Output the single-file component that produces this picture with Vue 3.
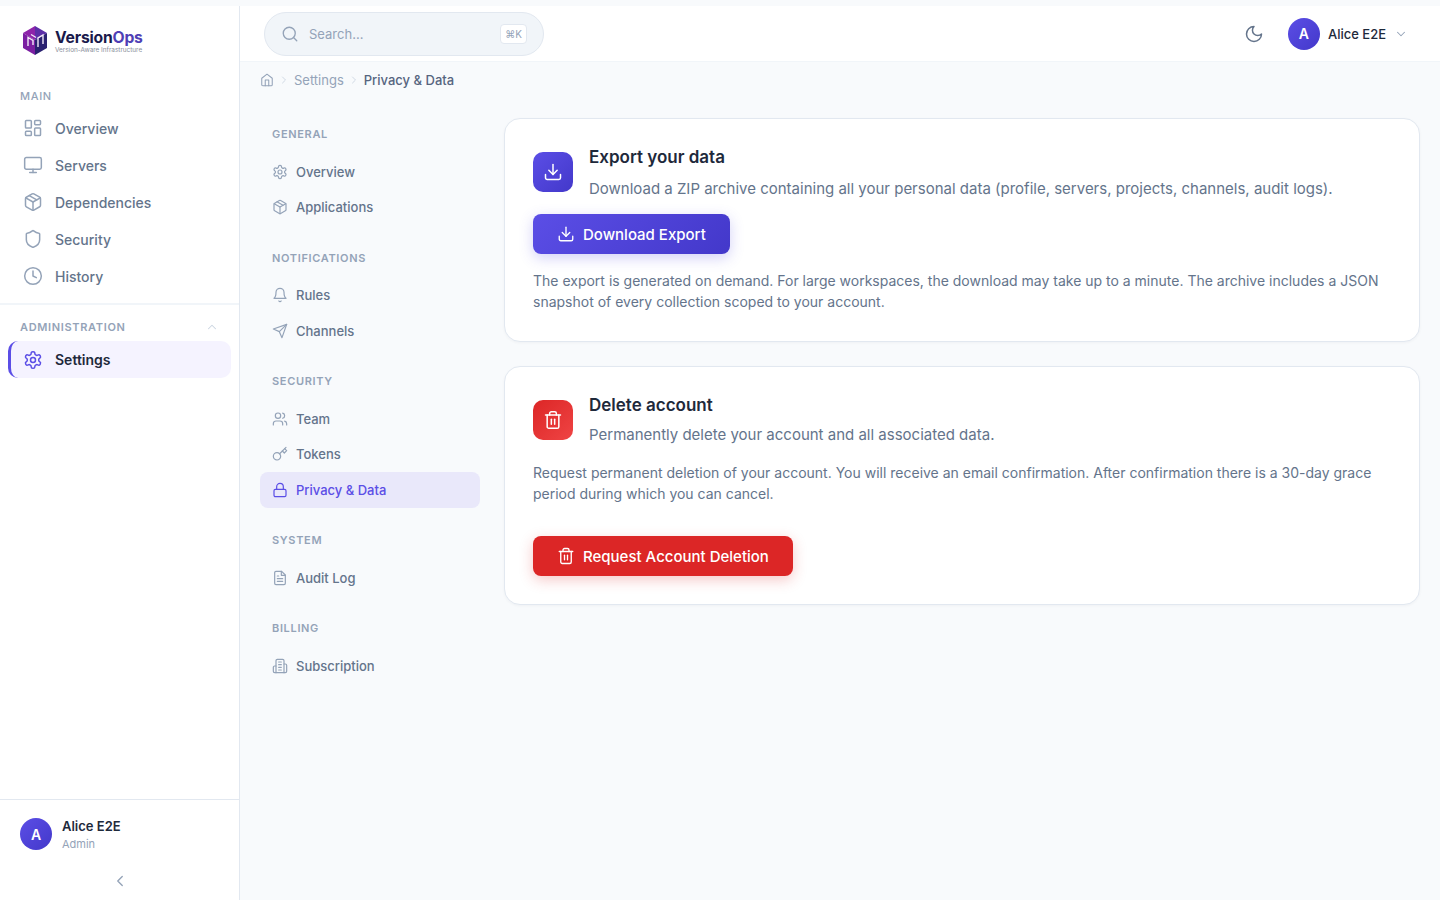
<template>
  <div class="shell">
    <aside class="sidebar">
      <div class="logo">
        <svg class="logo-mark" viewBox="0 0 24 29" width="24" height="29">
          <polygon points="12,0 12,14 0,7" fill="#8e24aa" />
          <polygon points="12,0 24,7 12,14" fill="#5c2fa8" />
          <polygon points="0,7 12,14 12,29 0,22" fill="#7b1fa2" />
          <polygon points="24,7 12,14 12,29 24,22" fill="#2a2170" />
          <path d="M5 20V11.5L10 14.5V19M15 21V12L20 9V18M8 8.5 13 11.500" fill="none" stroke="#f3e9f8" stroke-width="1.4" />
        </svg>
        <div class="logo-text">
          <div class="logo-name">Version<span>Ops</span></div>
          <div class="logo-tag">Version-Aware Infrastructure</div>
        </div>
      </div>

      <div class="side-label">Main</div>
      <nav class="side-nav">
        <a v-for="item in mainNav" :key="item.label" class="side-item">
          <AppIcon :name="item.icon" :size="20" />
          {{ item.label }}
        </a>
      </nav>

      <div class="side-divider"></div>

      <div class="side-label admin">
        Administration
        <AppIcon name="chevronUp" :size="14" class="admin-chevron" />
      </div>
      <nav class="side-nav">
        <a class="side-item active">
          <AppIcon name="settings" :size="20" />
          Settings
        </a>
      </nav>

      <div class="side-footer">
        <div class="user">
          <div class="avatar">A</div>
          <div class="user-info">
            <div class="user-name">Alice E2E</div>
            <div class="user-role">Admin</div>
          </div>
        </div>
        <button class="collapse">
          <AppIcon name="chevronLeft" :size="18" />
        </button>
      </div>
    </aside>

    <div class="main">
      <header class="topbar">
        <div class="search">
          <AppIcon name="search" :size="18" class="search-icon" />
          <span class="search-text">Search...</span>
          <kbd>⌘K</kbd>
        </div>
        <div class="top-right">
          <AppIcon name="moon" :size="20" class="moon" />
          <div class="avatar">A</div>
          <span class="top-name">Alice E2E</span>
          <AppIcon name="chevronDown" :size="14" class="top-chevron" />
        </div>
      </header>

      <div class="crumbs">
        <AppIcon name="home" :size="14" class="crumb-home" />
        <AppIcon name="chevronRight" :size="12" class="crumb-sep" />
        <span>Settings</span>
        <AppIcon name="chevronRight" :size="12" class="crumb-sep" />
        <span class="crumb-current">Privacy &amp; Data</span>
      </div>

      <div class="content">
        <nav class="subnav">
          <div v-for="group in settingsNav" :key="group.title" class="sub-group">
            <div class="sub-label">{{ group.title }}</div>
            <a
              v-for="item in group.items"
              :key="item.label"
              class="sub-item"
              :class="{ current: item.current }"
            >
              <AppIcon :name="item.icon" :size="16" />
              {{ item.label }}
            </a>
          </div>
        </nav>

        <section class="cards">
          <article class="card export">
            <div class="card-head">
              <div class="card-icon indigo"><AppIcon name="download" :size="20" /></div>
              <div>
                <h3>Export your data</h3>
                <p class="card-sub">
                  Download a ZIP archive containing all your personal data (profile, servers, projects, channels, audit logs).
                </p>
              </div>
            </div>
            <button class="btn btn-indigo">
              <AppIcon name="download" :size="18" />
              Download Export
            </button>
            <p class="card-text export-text">
              The export is generated on demand. For large workspaces, the download may take up to a minute. The archive includes a JSON snapshot of every collection scoped to your account.
            </p>
          </article>

          <article class="card danger">
            <div class="card-head">
              <div class="card-icon red"><AppIcon name="trash" :size="20" /></div>
              <div>
                <h3>Delete account</h3>
                <p class="card-sub">Permanently delete your account and all associated data.</p>
              </div>
            </div>
            <p class="card-text delete-text">
              Request permanent deletion of your account. You will receive an email confirmation. After confirmation there is a 30-day grace period during which you can cancel.
            </p>
            <button class="btn btn-red">
              <AppIcon name="trash" :size="18" />
              Request Account Deletion
            </button>
          </article>
        </section>
      </div>
    </div>
  </div>
</template>

<script setup>
import { h } from "vue";

// lucide outlines, circles and rects written out as paths
const icons = {
  dashboard: [
    "M4 3h5a1 1 0 0 1 1 1v7a1 1 0 0 1-1 1H4a1 1 0 0 1-1-1V4a1 1 0 0 1 1-1z",
    "M15 3h5a1 1 0 0 1 1 1v3a1 1 0 0 1-1 1h-5a1 1 0 0 1-1-1V4a1 1 0 0 1 1-1z",
    "M15 12h5a1 1 0 0 1 1 1v7a1 1 0 0 1-1 1h-5a1 1 0 0 1-1-1v-7a1 1 0 0 1 1-1z",
    "M4 16h5a1 1 0 0 1 1 1v3a1 1 0 0 1-1 1H4a1 1 0 0 1-1-1v-3a1 1 0 0 1 1-1z",
  ],
  monitor: [
    "M4 3h16a2 2 0 0 1 2 2v10a2 2 0 0 1-2 2H4a2 2 0 0 1-2-2V5a2 2 0 0 1 2-2z",
    "M8 21h8",
    "M12 17v4",
  ],
  box: [
    "M11 21.73a2 2 0 0 0 2 0l7-4A2 2 0 0 0 21 16V8a2 2 0 0 0-1-1.73l-7-4a2 2 0 0 0-2 0l-7 4A2 2 0 0 0 3 8v8a2 2 0 0 0 1 1.73z",
    "M12 22V12",
    "m3.3 7 8.7 5 8.7-5",
    "m7.5 4.27 9 5.15",
  ],
  shield: [
    "M20 13c0 5-3.5 7.5-7.66 8.95a1 1 0 0 1-.67-.01C7.5 20.5 4 18 4 13V6a1 1 0 0 1 1-1c2 0 4.5-1.2 6.24-2.72a1.17 1.17 0 0 1 1.52 0C14.51 3.81 17 5 19 5a1 1 0 0 1 1 1z",
  ],
  clock: ["M2 12a10 10 0 1 0 20 0a10 10 0 1 0-20 0", "M12 6v6l4 2"],
  settings: [
    "M12.22 2h-.44a2 2 0 0 0-2 2v.18a2 2 0 0 1-1 1.73l-.43.25a2 2 0 0 1-2 0l-.15-.08a2 2 0 0 0-2.73.73l-.22.38a2 2 0 0 0 .73 2.73l.15.1a2 2 0 0 1 1 1.72v.51a2 2 0 0 1-1 1.74l-.15.09a2 2 0 0 0-.73 2.73l.22.38a2 2 0 0 0 2.73.73l.15-.08a2 2 0 0 1 2 0l.43.25a2 2 0 0 1 1 1.73V20a2 2 0 0 0 2 2h.44a2 2 0 0 0 2-2v-.18a2 2 0 0 1 1-1.73l.43-.25a2 2 0 0 1 2 0l.15.08a2 2 0 0 0 2.73-.73l.22-.39a2 2 0 0 0-.73-2.73l-.15-.08a2 2 0 0 1-1-1.74v-.5a2 2 0 0 1 1-1.74l.15-.09a2 2 0 0 0 .73-2.73l-.22-.38a2 2 0 0 0-2.73-.73l-.15.08a2 2 0 0 1-2 0l-.43-.25a2 2 0 0 1-1-1.73V4a2 2 0 0 0-2-2z",
    "M9 12a3 3 0 1 0 6 0a3 3 0 1 0-6 0",
  ],
  bell: ["M6 8a6 6 0 0 1 12 0c0 7 3 9 3 9H3s3-2 3-9", "M10.3 21a1.94 1.94 0 0 0 3.4 0"],
  send: ["m22 2-7 20-4-9-9-4Z", "M22 2 11 13"],
  users: [
    "M16 21v-2a4 4 0 0 0-4-4H6a4 4 0 0 0-4 4v2",
    "M5 7a4 4 0 1 0 8 0a4 4 0 1 0-8 0",
    "M22 21v-2a4 4 0 0 0-3-3.87",
    "M16 3.13a4 4 0 0 1 0 7.75",
  ],
  key: [
    "M2 15.5a5.5 5.5 0 1 0 11 0a5.5 5.5 0 1 0-11 0",
    "m21 2-9.6 9.6",
    "m15.5 7.5 3 3L22 7l-3-3",
  ],
  lock: [
    "M5 11h14a2 2 0 0 1 2 2v7a2 2 0 0 1-2 2H5a2 2 0 0 1-2-2v-7a2 2 0 0 1 2-2z",
    "M7 11V7a5 5 0 0 1 10 0v4",
  ],
  file: [
    "M14.5 2H6a2 2 0 0 0-2 2v16a2 2 0 0 0 2 2h12a2 2 0 0 0 2-2V7.5L14.5 2z",
    "M14 2v6h6",
    "M16 13H8",
    "M16 17H8",
    "M10 9H8",
  ],
  building: [
    "M6 22V4a2 2 0 0 1 2-2h8a2 2 0 0 1 2 2v18Z",
    "M6 12H4a2 2 0 0 0-2 2v6a2 2 0 0 0 2 2h2",
    "M18 9h2a2 2 0 0 1 2 2v9a2 2 0 0 1-2 2h-2",
    "M10 6h4",
    "M10 10h4",
    "M10 14h4",
    "M10 18h4",
  ],
  search: ["M3 11a8 8 0 1 0 16 0a8 8 0 1 0-16 0", "m21 21-4.3-4.3"],
  home: ["m3 9 9-7 9 7v11a2 2 0 0 1-2 2H5a2 2 0 0 1-2-2z", "M9 22V12h6v10"],
  moon: ["M12 3a6 6 0 0 0 9 9 9 9 0 1 1-9-9Z"],
  download: ["M21 15v4a2 2 0 0 1-2 2H5a2 2 0 0 1-2-2v-4", "m7 10 5 5 5-5", "M12 15V3"],
  trash: [
    "M3 6h18",
    "M19 6v14c0 1-1 2-2 2H7c-1 0-2-1-2-2V6",
    "M8 6V4c0-1 1-2 2-2h4c1 0 2 1 2 2v2",
    "M10 11v6",
    "M14 11v6",
  ],
  chevronUp: ["m18 15-6-6-6 6"],
  chevronDown: ["m6 9 6 6 6-6"],
  chevronLeft: ["m15 18-6-6 6-6"],
  chevronRight: ["m9 18 6-6-6-6"],
};

function AppIcon(props) {
  return h(
    "svg",
    {
      width: props.size,
      height: props.size,
      viewBox: "0 0 24 24",
      fill: "none",
      stroke: "currentColor",
      "stroke-width": 1.8,
      "stroke-linecap": "round",
      "stroke-linejoin": "round",
      style: "flex-shrink:0",
    },
    icons[props.name].map((d) => h("path", { d }))
  );
}
AppIcon.props = ["name", "size"];

const mainNav = [
  { label: "Overview", icon: "dashboard" },
  { label: "Servers", icon: "monitor" },
  { label: "Dependencies", icon: "box" },
  { label: "Security", icon: "shield" },
  { label: "History", icon: "clock" },
];

const settingsNav = [
  {
    title: "General",
    items: [
      { label: "Overview", icon: "settings" },
      { label: "Applications", icon: "box" },
    ],
  },
  {
    title: "Notifications",
    items: [
      { label: "Rules", icon: "bell" },
      { label: "Channels", icon: "send" },
    ],
  },
  {
    title: "Security",
    items: [
      { label: "Team", icon: "users" },
      { label: "Tokens", icon: "key" },
      { label: "Privacy & Data", icon: "lock", current: true },
    ],
  },
  { title: "System", items: [{ label: "Audit Log", icon: "file" }] },
  { title: "Billing", items: [{ label: "Subscription", icon: "building" }] },
];
</script>

<style>
html,
body {
  margin: 0;
  background: #f8fafc;
}
</style>

<style scoped>
.shell {
  display: flex;
  height: 900px;
  padding-top: 6px;
  box-sizing: border-box;
  overflow: hidden;
  font-family: Inter, "Liberation Sans", sans-serif;
  color: #1e293b;
  background: #f8fafc;
}

/* sidebar */
.sidebar {
  width: 240px;
  flex-shrink: 0;
  box-sizing: border-box;
  display: flex;
  flex-direction: column;
  background: #fff;
  border-right: 1px solid #e2e8f0;
}
.logo {
  height: 82px;
  box-sizing: border-box;
  padding: 20px 0 0 23px;
  display: flex;
  gap: 8px;
}
.logo-text {
  margin-top: 3px;
}
.logo-name {
  font-size: 15.7px;
  line-height: 18px;
  font-weight: 700;
  letter-spacing: -0.2px;
  color: #1a1a4b;
}
.logo-name span {
  color: #4f3fb5;
}
.logo-tag {
  font-size: 6.4px;
  line-height: 7px;
  color: #8a8f9c;
}
.side-label {
  font-size: 11px;
  line-height: 16px;
  font-weight: 500;
  letter-spacing: 0.66px;
  text-transform: uppercase;
  color: #94a3b8;
  padding-left: 20px;
  margin-bottom: 6px;
}
.side-label.admin {
  display: flex;
  align-items: center;
  justify-content: space-between;
  font-weight: 600;
  padding-right: 20px;
}
.admin-chevron {
  color: #cbd5e1;
}
.side-nav {
  display: flex;
  flex-direction: column;
  gap: 1px;
  padding: 0 8px;
}
.side-item {
  height: 36px;
  box-sizing: border-box;
  display: flex;
  align-items: center;
  gap: 12px;
  padding-left: 15px;
  font-size: 14px;
  font-weight: 500;
  color: #64748b;
  border-radius: 10px;
}
.side-item svg {
  color: #94a3b8;
}
.side-item.active {
  height: 37px;
  width: 223px;
  padding-left: 12px;
  border-left: 3px solid #5b4ee6;
  background: #f5f3ff;
  font-weight: 600;
  color: #1e293b;
}
.side-item.active svg {
  color: #5b4ee6;
}
.side-divider {
  height: 2px;
  margin: 9px 0 14px;
  background: #f1f5f9;
}
.side-footer {
  margin-top: auto;
  border-top: 1px solid #e2e8f0;
  padding: 15px 20px 0;
  height: 101px;
  box-sizing: border-box;
}
.user {
  display: flex;
  align-items: center;
  gap: 10px;
}
.user-info {
  padding-top: 2px;
}
.avatar {
  width: 32px;
  height: 32px;
  border-radius: 50%;
  flex-shrink: 0;
  display: flex;
  align-items: center;
  justify-content: center;
  background: linear-gradient(135deg, #5b4ee6, #4338ca);
  color: #fff;
  font-size: 14px;
  font-weight: 600;
}
.user-name {
  font-size: 13px;
  line-height: 18px;
  font-weight: 600;
  color: #1e293b;
}
.user-role {
  font-size: 11px;
  line-height: 18px;
  color: #94a3b8;
}
.collapse {
  display: flex;
  margin: 15px auto 0;
  padding: 4px;
  border: 0;
  background: none;
  color: #94a3b8;
}

/* topbar */
.main {
  flex: 1;
  min-width: 0;
}
.topbar {
  height: 56px;
  box-sizing: border-box;
  display: flex;
  align-items: center;
  justify-content: space-between;
  padding: 0 24px;
  background: #fff;
  border-bottom: 1px solid #f1f5f9;
}
.search {
  width: 280px;
  height: 44px;
  box-sizing: border-box;
  display: flex;
  align-items: center;
  padding: 0 16px;
  background: #f1f5f9;
  border: 1px solid #e2e8f0;
  border-radius: 22px;
}
.search-icon {
  color: #94a3b8;
}
.search-text {
  margin-left: 10px;
  font-size: 13px;
  color: #94a3b8;
}
.search kbd {
  margin-left: auto;
  width: 27px;
  height: 20px;
  box-sizing: border-box;
  display: flex;
  align-items: center;
  justify-content: center;
  font-family: Inter, "DejaVu Sans", sans-serif;
  font-size: 10px;
  color: #94a3b8;
  background: #fff;
  border: 1px solid #e2e8f0;
  border-radius: 4px;
}
.top-right {
  display: flex;
  align-items: center;
  padding-right: 8px;
}
.moon {
  color: #64748b;
  margin-right: 24px;
}
.top-name {
  margin-left: 8px;
  font-size: 13px;
  font-weight: 500;
}
.top-chevron {
  margin-left: 8px;
  color: #94a3b8;
}

/* breadcrumb */
.crumbs {
  height: 36px;
  display: flex;
  align-items: center;
  gap: 4px;
  padding-left: 20px;
  font-size: 13px;
  color: #94a3b8;
}
.crumb-sep {
  color: #cbd5e1;
}
.crumb-current {
  color: #56657f;
  font-weight: 500;
}

/* settings nav + cards */
.content {
  display: flex;
  gap: 24px;
  padding: 20px 20px 0;
}
.subnav {
  width: 220px;
  flex-shrink: 0;
  padding-top: 8px;
}
.sub-group {
  margin-bottom: 24.5px;
}
.sub-label {
  font-size: 11px;
  line-height: 16px;
  font-weight: 600;
  letter-spacing: 0.66px;
  text-transform: uppercase;
  color: #94a3b8;
  padding-left: 12px;
  margin-bottom: 12px;
}
.sub-item {
  height: 35.5px;
  box-sizing: border-box;
  display: flex;
  align-items: center;
  gap: 8px;
  padding-left: 12px;
  font-size: 13px;
  font-weight: 500;
  color: #64748b;
  border-radius: 8px;
}
.sub-item svg {
  color: #94a3b8;
}
.sub-item.current {
  background: #e9e8fa;
  color: #5b4ee6;
}
.sub-item.current svg {
  color: #5b4ee6;
}
.cards {
  flex: 1;
  min-width: 0;
  display: flex;
  flex-direction: column;
  gap: 24px;
}
.card {
  box-sizing: border-box;
  padding: 28px;
  background: #fff;
  border: 1px solid #e2e8f0;
  border-radius: 16px;
  box-shadow: 0 1px 3px rgba(15, 23, 42, 0.04);
}
.card.export {
  padding-bottom: 29px;
}
.card-head {
  display: flex;
  gap: 16px;
}
.card-icon {
  width: 40px;
  height: 40px;
  margin-top: 5px;
  flex-shrink: 0;
  display: flex;
  align-items: center;
  justify-content: center;
  border-radius: 10px;
  color: #fff;
}
.card-icon.indigo {
  background: linear-gradient(135deg, #5b4ee6, #4338ca);
}
.card-icon.red {
  background: linear-gradient(135deg, #dc2626, #ef4444);
}
h3 {
  margin: 0;
  font-size: 17px;
  line-height: 20px;
  font-weight: 600;
  color: #1e293b;
}
.card-sub {
  margin: 11px 0 0;
  font-size: 15px;
  line-height: 22px;
  color: #64748b;
}
.danger .card-sub {
  margin-top: 9px;
}
.card-text {
  margin: 0;
  font-size: 14px;
  line-height: 21px;
  color: #64748b;
}
.export-text {
  margin-top: 16px;
}
.delete-text {
  margin-top: 16px;
}
.btn {
  height: 40px;
  display: inline-flex;
  align-items: center;
  gap: 8px;
  padding: 0 24px;
  border: 0;
  border-radius: 8px;
  font-family: inherit;
  font-size: 15px;
  font-weight: 500;
  color: #fff;
}
.btn-indigo {
  margin-top: 14px;
  background: linear-gradient(135deg, #5b4ee6, #4338ca);
  box-shadow: 0 4px 14px rgba(79, 70, 229, 0.25);
}
.btn-red {
  margin-top: 32px;
  background: #dc2626;
  box-shadow: 0 4px 14px rgba(220, 38, 38, 0.25);
}
</style>
